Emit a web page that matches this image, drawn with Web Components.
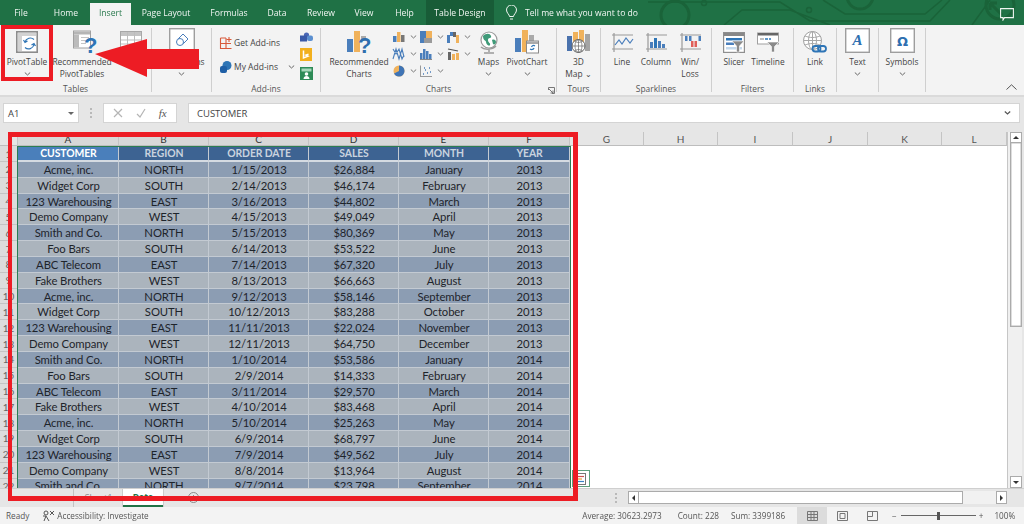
<!DOCTYPE html>
<html lang="en"><head><meta charset="utf-8"><title>Excel</title>
<style>
html,body{margin:0;padding:0;width:1024px;height:524px;overflow:hidden;background:#e6e6e6}
</style></head><body>
<x-app>
<x-titlebar></x-titlebar>
<x-ribbon>
  <x-group label="Tables" w="152" pad="3">
    <x-btn w="48" icon="pivot" label="PivotTable" chev></x-btn>
    <x-btn w="4"></x-btn>
    <x-btn w="54" icon="recpivot" label="Recommended&#10;PivotTables"></x-btn>
    <x-btn w="44" icon="table" label="Table"></x-btn>
  </x-group>
  <x-group label="" w="60" pad="0">
    <x-btn w="59" icon="illus" label="Illustrations" chev box></x-btn>
  </x-group>
  <x-group label="Add-ins" w="109" pad="8">
    <x-addins></x-addins>
  </x-group>
  <x-group label="Charts" w="236" pad="8" launcher>
    <x-btn w="60" icon="recchart" label="Recommended&#10;Charts"></x-btn>
    <x-chartgrid></x-chartgrid>
    <x-btn w="29" icon="maps" label="Maps" chev></x-btn>
    <x-btn w="48" icon="pchart" label="PivotChart" chev></x-btn>
  </x-group>
  <x-group label="Tours" w="44" pad="0">
    <x-btn w="43" icon="map3d" label="3D&#10;Map ⌄"></x-btn>
  </x-group>
  <x-group label="Sparklines" w="111" pad="4">
    <x-btn w="34" icon="line" label="Line"></x-btn>
    <x-btn w="34" icon="column" label="Column"></x-btn>
    <x-btn w="34" icon="winloss" label="Win/&#10;Loss"></x-btn>
  </x-group>
  <x-group label="Filters" w="82" pad="5">
    <x-btn w="34" icon="slicer" label="Slicer"></x-btn>
    <x-btn w="34" icon="timeline" label="Timeline"></x-btn>
  </x-group>
  <x-group label="Links" w="43" pad="0">
    <x-btn w="42" icon="link" label="Link"></x-btn>
  </x-group>
  <x-group label="" w="42" pad="0">
    <x-btn w="41" icon="text" label="Text" chev box></x-btn>
  </x-group>
  <x-group label="" w="47" pad="0">
    <x-btn w="46" icon="symbols" label="Symbols" chev box></x-btn>
  </x-group>
</x-ribbon>
<x-formula></x-formula>
<x-sheet></x-sheet>
<x-tabs></x-tabs>
<x-status></x-status>
<x-marks></x-marks>
</x-app>
<script>
const B='#4a7ebb',B2='#2e75b6',O='#f0b25c',G='#808080',L='#bdbdbd';
const ruler=(w,h)=>`<path d="M1 2H${w-1}M1 ${h-3}H${w-1}M3 0V${h}" stroke="#9a9a9a" stroke-width="1.2" fill="none"/>`;
const ICONS={
pivot:[22,22,`<rect x=".8" y=".8" width="20.4" height="20.4" fill="#fff" stroke="#8c8c8c" stroke-width="1.6"/><rect x="2" y="2" width="18" height="3" fill="#d2d2d2"/><rect x="2" y="5" width="4" height="15" fill="#d2d2d2"/><path d="M18 8.500a5.500 5.500 0 0 0-9 2.500M7.500 9l1.500 2.500 2.500-1.500M9 16.500a5.500 5.500 0 0 0 9-3M19.500 15l-1.500-2.500-2.500 1.500" fill="none" stroke="${B2}" stroke-width="1.200"/>`],
recpivot:[24,24,`<rect x="3.500" y="1" width="17" height="17" fill="#fff" stroke="#a0a0a0"/><rect x="4" y="1.500" width="16" height="3" fill="#b5b5b5"/><rect x="4" y="4.500" width="5" height="13" fill="#bbb"/><path d="M11 7.500h8M11 10.500h8M11 13.500h5" stroke="#c5c5c5"/><text x="14" y="22.500" font-family="Liberation Sans" font-weight="700" font-size="22" fill="${B2}">?</text>`],
table:[22,22,`<rect x=".5" y=".5" width="21" height="21" fill="#fff" stroke="#a8a8a8"/><rect x="1" y="1" width="20" height="4" fill="#c4c4c4"/><path d="M7.500 1v20M14.500 1v20M1 9h20M1 13h20M1 17h20" stroke="#bdbdbd" fill="none"/>`],
illus:[26,25,`<rect x=".7" y=".7" width="24.600" height="23.600" fill="#fff" stroke="#9e9e9e" stroke-width="1.400"/><path d="M14 6l5 5-5 5-5-5z" fill="#fff" stroke="${B}"/><circle cx="11" cy="14" r="3.500" fill="#fff" stroke="${B}"/>`],
getadd:[12,12,`<path d="M.5 1v10.500h11M.5 1H6M.5 6.500H11M6 1v10.500" fill="none" stroke="#d8593a" stroke-width="1.100"/><path d="M9 0v5M6.500 2.500h5" stroke="#d8593a" stroke-width="1.100"/>`],
myadd:[12,12,`<circle cx="7" cy="4.500" r="4.500" fill="${B2}"/><rect x="0" y="5" width="7" height="7" rx="2" fill="#1f5fa6"/>`],
teams:[13,10,`<circle cx="6.500" cy="3" r="2.600" fill="#4a67b5"/><rect x="0" y="3.500" width="7" height="6" fill="#3a5aa8"/><rect x="7" y="3.500" width="6" height="5.500" rx="2" fill="#5b8fd0"/>`],
bing:[12,13,`<rect width="12" height="13" fill="#f2b01e"/><path d="M3.500 2.500v7.500l4.500-1.800-2-1.100 2.500-.8" fill="none" stroke="#fff" stroke-width="1.500"/>`],
people:[13,13,`<rect width="13" height="13" fill="#2e8b57"/><rect x="1.500" y="1.500" width="10" height="3" fill="#a8d8bb"/><circle cx="6.500" cy="7" r="1.800" fill="#fff"/><path d="M3.500 12c0-4 6-4 6 0z" fill="#fff"/>`],
recchart:[24,24,`<rect x="0" y="9" width="6" height="13" fill="${B}"/><rect x="7" y="1" width="6" height="21" fill="${O}"/><rect x="14" y="6" width="5" height="5" fill="#aaa"/><text x="11" y="23" font-family="Liberation Sans" font-weight="700" font-size="22" fill="#2f6fae">?</text>`],
c1:[12,12,`<rect y="5" width="3.500" height="6" fill="${B}"/><rect x="4" y="1" width="3.500" height="10" fill="${O}"/><rect x="8" y="4" width="3.500" height="7" fill="#777"/>`],
c2:[12,12,`<path d="M0 1l3 5 3-5 3 10 2-4M0 11l3-10 3 10 3-10 2 8" fill="none" stroke="${B}" stroke-width="1.100"/>`],
c3:[12,12,`<circle cx="6" cy="6" r="5.500" fill="${O}"/><path d="M6 6V.5a5.500 5.500 0 0 1 0 11 5.500 5.500 0 0 1-5-3z" fill="#3f74b5"/>`],
c4:[12,12,`<rect width="12" height="12" fill="${B}"/><rect x="6" width="6" height="7" fill="${O}"/><rect y="7" x="4" width="8" height="5" fill="#9a9a9a"/>`],
c5:[12,12,`<rect y="5" width="2.500" height="6" fill="${B}"/><rect x="3" y="1" width="2.500" height="10" fill="${B}"/><rect x="6" y="3" width="2.500" height="8" fill="${B}"/><rect x="9" y="6" width="2.500" height="5" fill="${B}"/><path d="M0 11.500h12" stroke="#888"/>`],
c6:[12,12,`<path d="M.5 12V.5M.5 11.500H12" stroke="#999" fill="none"/><path d="M3 9h1M5 5h1M7 8h1M9 3h1M10 7h1M4 3h1" stroke="${B}" stroke-width="1.500"/>`],
c7:[12,12,`<rect y="4" width="3" height="8" fill="${B}"/><rect x="3" y="1" width="3" height="4" fill="${B}"/><rect x="6" y="1" width="3" height="5" fill="#666"/><rect x="9" y="4" width="3" height="8" fill="${O}"/>`],
c8:[12,12,`<path d="M1 1l10 2" stroke="#555" stroke-width="1.200"/><rect x="1" y="4" width="3" height="8" fill="#666"/><rect x="5" y="6" width="3" height="6" fill="${O}"/><rect x="9" y="5" width="3" height="7" fill="${O}"/>`],
maps:[20,23,`<circle cx="10" cy="9" r="8" fill="#fff" stroke="#9a9a9a" stroke-width="1.200"/><path d="M4 5c3-3 7-3 8 0s-3 1-3 4 3 3 2 5-4-1-4-3-3-1-3-6zM13 9c2-1 4 0 4 2s-2 3-3 2z" fill="#3f9a78"/><path d="M2 16c3 3 11 3 15-1M10 18v3M5 22h10" stroke="#9a9a9a" stroke-width="1.500" fill="none"/>`],
pchart:[24,24,`<rect x="0" y="8" width="6" height="14" fill="${B}"/><rect x="7" y="0" width="6" height="22" fill="${O}"/><rect x="14" y="5" width="5" height="8" fill="#aaa"/><rect x="11.500" y="11" width="12" height="12" fill="#fff" stroke="#8a8a8a"/><rect x="12" y="11.500" width="11" height="2.500" fill="#aaa"/><path d="M20 16c-1.500-1-3-.5-3.500 1M15 19c1.500 1 3.500.5 4-1" stroke="${B2}" fill="none" stroke-width="1.200"/>`],
map3d:[24,24,`<rect x="0" y="6" width="5" height="15" fill="#4a72ad"/><rect x="6" y="2" width="5" height="14" fill="${O}"/><rect x="12" y="0" width="5" height="15" fill="${O}"/><rect x="18" y="4" width="5" height="17" fill="#a4a4a4"/><circle cx="11.500" cy="16" r="6.500" fill="#fff" stroke="#666"/><path d="M5 16h13M11.500 9.500v13M7.500 11c3 2 5 2 8 0M7.500 21c3-2 5-2 8 0M8 16c0-4 1.500-6 3.500-6.500M15 16c0-4-1.500-6-3.500-6.500M8 16c0 4 1.500 6 3.500 6.500M15 16c0 4-1.500 6-3.500 6.500" stroke="#666" fill="none" stroke-width=".7"/>`],
line:[23,19,ruler(23,19)+`<path d="M4 12l4-5 3 4 4-6 4 5 3-4" fill="none" stroke="${B}" stroke-width="1.200"/>`],
column:[23,19,ruler(23,19)+`<rect x="5" y="9" width="3" height="6" fill="${B}"/><rect x="9" y="5" width="3" height="10" fill="${B2}"/><rect x="13" y="8" width="3" height="7" fill="${B}"/><rect x="17" y="11" width="3" height="4" fill="${B}"/>`],
winloss:[23,19,ruler(23,19)+`<rect x="6" y="3" width="2.500" height="5" fill="${B}"/><rect x="10" y="3" width="2.500" height="5" fill="${B}"/><rect x="12" y="8" width="2.500" height="6" fill="#e0605a"/><rect x="15.500" y="8" width="2.500" height="6" fill="#e0605a"/><rect x="19.500" y="3" width="2.500" height="5" fill="${B}"/>`],
slicer:[22,21,`<rect x=".6" y=".6" width="20.800" height="19.800" fill="#fff" stroke="#8f8f8f" stroke-width="1.200"/><rect x="1" y="1" width="20" height="3" fill="#888"/><rect x="3" y="6" width="16" height="2.500" fill="${B2}"/><rect x="3" y="10.500" width="8" height="2.500" fill="${B}"/><rect x="3" y="15" width="16" height="2.500" fill="#c5d9ec"/><path d="M9 9h12l-4.500 5v6h-3v-6z" fill="#8a8a8a" stroke="#fff" stroke-width=".6"/>`],
timeline:[22,20,`<rect x=".5" y="1" width="21" height="11" fill="#fff" stroke="#a0a0a0"/><rect x="1" y="1" width="20" height="2.500" fill="#666"/><path d="M3 7h4" stroke="#aaa" stroke-width="1.500"/><path d="M8 7h3M12 7h2" stroke="${B2}" stroke-width="1.500"/><path d="M10 10h12l-4.500 4.500v5.500h-3v-5.500z" fill="#8a8a8a" stroke="#fff" stroke-width=".6"/>`],
link:[24,23,`<circle cx="9.500" cy="9.500" r="9" fill="#fff" stroke="#a0a0a0"/><path d="M.5 9.500h18M9.500.5v18M2 5c5 2 10 2 15 0M2 14c5-2 10-2 15 0" stroke="#a8a8a8" fill="none"/><ellipse cx="9.500" cy="9.500" rx="4" ry="9" fill="none" stroke="#a8a8a8"/><rect x="9.500" y="15" width="8" height="5.500" rx="2.700" fill="none" stroke="${B2}" stroke-width="1.800"/><rect x="15" y="15" width="8" height="5.500" rx="2.700" fill="none" stroke="${B2}" stroke-width="1.800"/>`],
text:[25,25,`<rect x=".7" y=".7" width="23.600" height="23.600" fill="#fff" stroke="#9e9e9e" stroke-width="1.400"/><text x="12.500" y="17" text-anchor="middle" font-family="Liberation Serif" font-style="italic" font-weight="700" font-size="15" fill="#2e6fb0">A</text>`],
symbols:[25,25,`<rect x=".7" y=".7" width="23.600" height="23.600" fill="#fff" stroke="#9e9e9e" stroke-width="1.400"/><text x="12.500" y="17.500" text-anchor="middle" font-family="DejaVu Sans" font-weight="700" font-size="13" fill="#2e6fb0">Ω</text>`]
};
const svg=(n)=>{const i=ICONS[n];return i?`<svg width="${i[0]}" height="${i[1]}" viewBox="0 0 ${i[0]} ${i[1]}" style="display:block;overflow:visible">${i[2]}</svg>`:''};
const CHEV=(c='#666')=>`<svg width="7" height="4" viewBox="0 0 7 4" style="display:block"><path d="M.8.500L3.500 3 6.200.500" fill="none" stroke="${c}" stroke-width="1"/></svg>`;
const UI='"Open Sans","Noto Sans",sans-serif';
function def(name,html,setup){customElements.define(name,class extends HTMLElement{
  connectedCallback(){if(this.shadowRoot)return;const r=this.attachShadow({mode:'open'});r.innerHTML=typeof html==='function'?html(this):html;if(setup)setup(r,this);}
});}
def('x-app',`<style>:host{display:flex;flex-direction:column;position:relative;width:1024px;height:524px;overflow:hidden;font-family:${UI};filter:blur(.35px)}</style><slot></slot>`);

const TABS=[['File',42],['Home',48],['Insert',41,'on'],['Page Layout',70],['Formulas',56],['Data',40],['Review',48],['View',38],['Help',43],['Table Design',68,'tool']];
def('x-titlebar',`<style>
:host{display:flex;flex:none;height:25px;background:#1f7145;position:relative;color:#f1f6f3;font-size:8.600px;overflow:hidden}
.t{display:flex;align-items:center;justify-content:center;height:25px;white-space:pre;position:relative;z-index:1}
.on{background:#f3f3f3;color:#2a7a4e;height:22px;margin-top:3px;padding-bottom:3px;box-sizing:border-box}
.tool{background:#185c37}
.tell{display:flex;align-items:center;margin-left:12px;gap:8px;position:relative;z-index:1}
.pat{position:absolute;left:0;top:0}
.c{position:absolute;left:1000px;top:8px;z-index:1}
</style>
<svg class="pat" width="1024" height="25" viewBox="0 0 1024 25" fill="none" stroke="#1a6339" stroke-width="1.500">
<path d="M648 2H780L810 21H930L950 0M724 25L742 10H790L830 25M823 0L845 14H925L942 0M972 25L990 0"/><circle cx="704" cy="3" r="2.500"/><circle cx="809" cy="10" r="2.500"/><circle cx="860" cy="-4" r="13" stroke-width="3"/><circle cx="1000" cy="5" r="14" stroke-width="3"/><circle cx="675" cy="15" r="14" stroke-width="3"/><path d="M990 3L1002 15M990 3h7M990 3v7" stroke-width="3"/>
</svg>
${TABS.map(([t,w,c])=>`<div class="t ${c||''}" style="width:${w}px">${t}</div>`).join('')}
<div class="tell"><svg width="11" height="16" viewBox="0 0 11 16" fill="none" stroke="#f1f6f3" stroke-width="1"><path d="M3.500 11.500c0-2-3-3.500-3-6.500a5 5 0 0 1 10 0c0 3-3 4.500-3 6.500zM4 14h3"/></svg><span>Tell me what you want to do</span></div>
<svg class="c" width="14" height="13" viewBox="0 0 14 13" fill="none" stroke="#eef4f0" stroke-width="1.100"><path d="M.6.600h12.800v9H4.500L3 12V9.600H.6z"/></svg>`);

def('x-ribbon',`<style>:host{display:flex;flex:none;height:72px;padding-top:3px;box-sizing:border-box;background:#f3f3f3;border-bottom:2px solid #dadada;position:relative}
.col{position:absolute;right:7px;bottom:5px}</style><slot></slot>
<svg class="col" width="11" height="6" viewBox="0 0 11 6" fill="none" stroke="#555"><path d="M.5 5.500L5.500.8l5 4.700"/></svg>`);

def('x-group',h=>`<style>
:host{display:flex;flex:none;flex-direction:column;height:64px;box-sizing:border-box;border-right:1px solid #cfcfcf;width:${h.getAttribute('w')}px;position:relative}
.b{display:flex;flex:1;padding-left:${h.getAttribute('pad')}px;min-height:0}
.l{height:12px;line-height:12px;margin-bottom:-3px;text-align:center;font-size:8.400px;color:#555}
.la{position:absolute;right:1px;bottom:-2px}
</style><div class="b"><slot></slot></div><div class="l">${h.getAttribute('label')}</div>
${h.hasAttribute('launcher')?`<svg class="la" width="7" height="7" viewBox="0 0 7 7" fill="none" stroke="#777"><path d="M.5 3V.5h6v6H4M1 2l4 4M5 3.500V6H2.500"/></svg>`:''}`);

def('x-btn',h=>{const box=h.hasAttribute('box');const lab=(h.getAttribute('label')||'').split('\n');return `<style>
:host{display:flex;flex:none;flex-direction:column;align-items:center;width:${h.getAttribute('w')}px;font-size:8.400px;color:#444}
.i{height:${box?'25px':'28px'};display:flex;align-items:${box?'flex-start':'center'};justify-content:center}
.t{line-height:12px;text-align:center;white-space:nowrap;height:12px;${box?'margin-top:3px':''}}
.c{height:12px;display:flex;align-items:center;justify-content:center}
</style><div class="i">${svg(h.getAttribute('icon'))}</div>
${h.getAttribute('label')?lab.map(l=>`<div class="t">${l}</div>`).join(''):''}
${h.hasAttribute('chev')?`<div class="c">${CHEV()}</div>`:''}`});

def('x-addins',`<style>:host{display:flex;font-size:8.500px;color:#444;width:100px}
.l{width:72px;display:flex;flex-direction:column;padding-top:8px}
.r{display:flex;align-items:center;gap:2px;height:13px;white-space:nowrap}
.r+.r{margin-top:11px}
.s{display:flex;flex-direction:column;gap:6px;padding-top:4px;margin-left:8px}
.ch{margin-left:8px}
</style><div class="l"><div class="r">${svg('getadd')}<span>Get Add-ins</span></div><div class="r">${svg('myadd')}<span>My Add-ins</span><span class="ch">${CHEV()}</span></div></div>
<div class="s">${svg('teams')}${svg('bing')}${svg('people')}</div>`);

def('x-chartgrid',`<style>:host{display:grid;flex:none;width:81px;margin-left:4px;grid-template-columns:repeat(3,27px);grid-auto-rows:17px;align-content:start}
.g{display:flex;align-items:center;gap:5px}</style>
${['c1','c4','c7','c2','c5','c8','c3','c6'].map(n=>`<div class="g">${svg(n)}${CHEV('#777')}</div>`).join('')}`);

def('x-formula',`<style>
:host{display:flex;flex:none;height:35px;padding-top:6px;box-sizing:border-box;background:#e6e6e6;font-size:9.500px;color:#444;align-items:flex-start;padding-left:3px}
.box{background:#fff;height:20px;display:flex;align-items:center;box-shadow:0 0 0 1px #d4d4d4 inset;box-sizing:border-box}
.n{width:76px;padding:0 5px;justify-content:space-between}
.dots{width:24px;height:20px;display:flex;justify-content:center;align-items:center}
.fx{width:74px;justify-content:space-around;padding:0 4px}
.f{width:832px;margin-left:11px;padding:0 9px;justify-content:space-between}
i{font-family:"Liberation Serif";color:#555;font-size:11px}
.a{width:0;height:0;border:3px solid transparent;border-top:3px solid #666;border-bottom:0}
</style><div class="box n"><span>A1</span><span class="a"></span></div>
<div class="dots"><svg width="2" height="10" style="display:block"><path d="M1 0v2M1 4v2M1 8v2" stroke="#aaa" stroke-width="1.500"/></svg></div>
<div class="box fx"><svg width="10" height="10" fill="none" stroke="#b5b5b5" stroke-width="1.200"><path d="M1 1l8 8M9 1L1 9"/></svg><svg width="10" height="10" fill="none" stroke="#b5b5b5" stroke-width="1.200"><path d="M1 6l3 3 5-8"/></svg><i>fx</i></div>
<div class="box f"><span>CUSTOMER</span><svg width="7" height="4"><path d="M.8.500L3.500 3 6.200.500" fill="none" stroke="#555" stroke-width="1.200"/></svg></div>`);

const DATA=`CUSTOMER|REGION|ORDER DATE|SALES|MONTH|YEAR
Acme, inc.|NORTH|1/15/2013|$26,884|January|2013
Widget Corp|SOUTH|2/14/2013|$46,174|February|2013
123 Warehousing|EAST|3/16/2013|$44,802|March|2013
Demo Company|WEST|4/15/2013|$49,049|April|2013
Smith and Co.|NORTH|5/15/2013|$80,369|May|2013
Foo Bars|SOUTH|6/14/2013|$53,522|June|2013
ABC Telecom|EAST|7/14/2013|$67,320|July|2013
Fake Brothers|WEST|8/13/2013|$66,663|August|2013
Acme, inc.|NORTH|9/12/2013|$58,146|September|2013
Widget Corp|SOUTH|10/12/2013|$83,288|October|2013
123 Warehousing|EAST|11/11/2013|$22,024|November|2013
Demo Company|WEST|12/11/2013|$64,750|December|2013
Smith and Co.|NORTH|1/10/2014|$53,586|January|2014
Foo Bars|SOUTH|2/9/2014|$14,333|February|2014
ABC Telecom|EAST|3/11/2014|$29,570|March|2014
Fake Brothers|WEST|4/10/2014|$83,468|April|2014
Acme, inc.|NORTH|5/10/2014|$25,263|May|2014
Widget Corp|SOUTH|6/9/2014|$68,797|June|2014
123 Warehousing|EAST|7/9/2014|$49,562|July|2014
Demo Company|WEST|8/8/2014|$13,964|August|2014
Smith and Co.|NORTH|9/7/2014|$23,798|September|2014`.split('\n').map(r=>r.split('|'));
const COLS='ABCDEFGHIJKL'.split('');
def('x-sheet',`<style>
:host{display:flex;flex:none;height:356px;background:#e6e6e6;position:relative;overflow:hidden;font-family:Lato,"Liberation Sans",sans-serif}
.g{display:grid;flex:none;grid-template-columns:18px 101px 90px 100px 90px 90px 81px 74px 74px 75px 75px 74px 65px;grid-template-rows:14px 16px repeat(21,15.84px);align-content:start;background:#fff;height:356px;overflow:hidden;border-right:1px solid #c6c6c6;box-sizing:border-box;width:1008px}
.ch{background:#e6e6e6;border-right:1px solid #c4c4c4;border-bottom:1px solid #bdbdbd;box-sizing:border-box;font-size:10px;color:#555;display:flex;align-items:center;justify-content:center;line-height:1}
.ch.s{background:#d8d8d8;color:#333}
.rh{background:#dcdcdc;border-right:1px solid #bdbdbd;border-bottom:1px solid #c4c4c4;box-sizing:border-box;font-size:10px;color:#666;display:flex;align-items:center;justify-content:center}
.c{display:flex;align-items:center;justify-content:center;font-size:11.300px;color:#1e242b;box-sizing:border-box;border-right:1px solid #c3cad2;border-bottom:1px solid #c3cad2;white-space:nowrap;overflow:hidden;letter-spacing:-.1px;padding-left:1px}
.h{background:#3d6392;color:#c9d3df;font-weight:700;font-size:10.400px;border-bottom:2px solid #d5dbe2}
.h.a{background:#4a7fbb;color:#fff}
.o{background:#8c9db3}.e{background:#abb4bd}
.e0{background:#fff}
.sel{position:absolute;left:17px;top:14px;width:554px;height:342px;box-sizing:border-box;border:1.500px solid #2c7d52;border-bottom:0;pointer-events:none}
.qa{position:absolute;left:572px;top:338px;width:18px;height:17px;box-sizing:border-box;border:1px solid #5ea07e;background:#fff;display:flex;align-items:center;justify-content:center}
.sb{flex:none;padding:0 0 0 2px;display:flex;flex-direction:column;box-sizing:border-box;background:#f0f0f0;height:356px;width:14px}
.ab{height:11px;flex:none;background:#fff;border:1px solid #ababab;box-sizing:border-box;display:flex;align-items:center;justify-content:center}
.th{height:184px;flex:none;background:#fff;border:1px solid #ababab;border-top:0;box-sizing:border-box;box-shadow:0 0 0 .5px #bbb inset}
.tr{flex:1}
.up{border:3px solid transparent;border-bottom:3px solid #333;border-top:0;width:0;height:0}
.dn{border:3px solid transparent;border-top:3px solid #333;border-bottom:0;width:0;height:0}
</style>
<div class="g" id="g"></div>
<div class="sb"><div class="ab"><div class="up"></div></div><div class="th"></div><div class="tr"></div><div class="ab" style="height:12px"><div class="dn"></div></div></div>
<div class="sel"></div>
<div class="qa"><svg width="12" height="12" viewBox="0 0 12 12"><rect x="2.500" y=".5" width="8" height="11" fill="#fff" stroke="#777"/><path d="M1 3.500h8" stroke="#c55" stroke-width="1.200"/><path d="M1 6h6" stroke="#e8a33d" stroke-width="1.200"/><path d="M1 8.500h8" stroke="#3b82c4" stroke-width="1.200"/></svg></div>`,
r=>{let h='<div class="ch"></div>';COLS.forEach((c,i)=>h+=`<div class="ch ${i<6?'s':''}">${c}</div>`);
DATA.forEach((row,ri)=>{h+=`<div class="rh">${ri+1}</div>`;
 row.forEach((v,ci)=>{const cls=ri===0?('h'+(ci===0?' a':'')):(ri%2?'o':'e');h+=`<div class="c ${cls}">${v}</div>`});
 for(let i=6;i<12;i++)h+='<div class="e0"></div>';});
r.getElementById('g').innerHTML=h;});

def('x-tabs',`<style>
:host{display:flex;flex:none;height:19px;background:#e6e6e6;font-size:8.600px;color:#777;align-items:flex-start;border-top:1px solid #cfcfcf;box-sizing:border-box}
.nav{width:74px;height:18px;border-right:1px solid #c2c2c2;box-sizing:border-box}
.t{height:18px;display:flex;align-items:center;justify-content:center}
.sh{width:49px;color:#8a8a8a}
.d{width:40px;background:#fff;color:#217346;font-weight:700;border-bottom:2px solid #217346;box-sizing:border-box;box-shadow:1px 0 0 #ccc,-1px 0 0 #ccc}
.p{margin-left:25px;margin-top:3px;width:11px;height:11px}
.dots{margin-left:416px;margin-top:4px}
.h{margin-left:11px;margin-top:2px;width:379px;height:13px;display:flex;background:#f1f1f1;box-sizing:border-box}
.b{width:11px;height:13px;background:#fff;border:1px solid #ababab;box-sizing:border-box;display:flex;align-items:center;justify-content:center;flex:none}
.th{width:324px;height:13px;background:#fff;border:1px solid #ababab;border-left:0;box-sizing:border-box;flex:none}
.tr{flex:1}
.l{border:3px solid transparent;border-right:3px solid #333;border-left:0;width:0;height:0}
.rr{border:3px solid transparent;border-left:3px solid #333;border-right:0;width:0;height:0}
</style><div class="nav"></div><div class="t sh">Sheet1</div><div class="t d">Data</div>
<svg class="p" viewBox="0 0 11 11" fill="none" stroke="#8a8a8a"><circle cx="5.500" cy="5.500" r="5"/><path d="M5.500 3v5M3 5.500h5"/></svg>
<svg class="dots" width="2" height="10"><path d="M1 0v2M1 4v2M1 8v2" stroke="#aaa" stroke-width="1.500"/></svg>
<div class="h"><div class="b"><div class="l"></div></div><div class="th"></div><div class="tr"></div><div class="b"><div class="rr"></div></div></div>`);

def('x-status',`<style>
:host{display:flex;flex:none;height:17px;background:#f3f3f3;font-size:8.200px;color:#555;align-items:center;padding-left:6px;box-sizing:border-box;white-space:nowrap}
.a{display:flex;align-items:center;gap:2px;margin-left:13px}
.sp{flex:1}
.v{width:30px;height:17px;display:flex;align-items:center;justify-content:center;flex:none}
.on{background:#dcdcdc}
.z{display:flex;align-items:center;margin-left:5px;color:#555;width:132px;flex:none}
.tr{width:75px;height:1px;background:#666;position:relative;margin:0 3px 0 4px}
.tr b{position:absolute;left:36px;top:-3.500px;width:3px;height:8px;background:#555}
</style><span>Ready</span>
<span class="a"><svg width="13" height="12" viewBox="0 0 13 12" fill="none" stroke="#555"><circle cx="4" cy="3" r="2"/><path d="M1 6l3 0 3 5M4 6l-2 5M8 1l4 4M12 1L8 5"/></svg>Accessibility: Investigate</span>
<span class="sp"></span><span style="margin-right:16px">Average: 30623.2973</span><span style="margin-right:12px">Count: 228</span><span style="width:66px;flex:none">Sum: 3399186</span>
<span class="v on"><svg width="11" height="10" fill="none" stroke="#777"><path d="M.5.500h10v9H.5zM.5 3.500h10M.5 6.500h10M4 .5v9M7 .5v9"/></svg></span>
<span class="v"><svg width="11" height="10" fill="none" stroke="#777"><path d="M.5.500h10v9H.5zM3 2.500h5v5H3z"/></svg></span>
<span class="v"><svg width="11" height="10" fill="none" stroke="#777"><path d="M.5.500h10v9H.5zM.5 5.500h5v-5"/></svg></span>
<span class="z">−<span class="tr"><b></b></span>+<span style="margin-left:11px">100%</span></span>`);

def('x-marks',`<style>:host{position:absolute;inset:0;pointer-events:none;display:block}
.p{position:absolute;left:1px;top:25px;width:52px;height:56px;border:4px solid #ed1c24;box-sizing:border-box}
.t{position:absolute;left:8px;top:132px;width:570px;height:369px;border:5px solid #ed1c24;border-left-width:4px;box-sizing:border-box}
svg{position:absolute;left:0;top:0}</style>
<div class="p"></div><div class="t"></div>
<svg width="220" height="90"><polygon points="95,54 147,39 147,49 199,49 199,69 147,69 147,77" fill="#ed1c24"/></svg>`);
</script></body></html>
